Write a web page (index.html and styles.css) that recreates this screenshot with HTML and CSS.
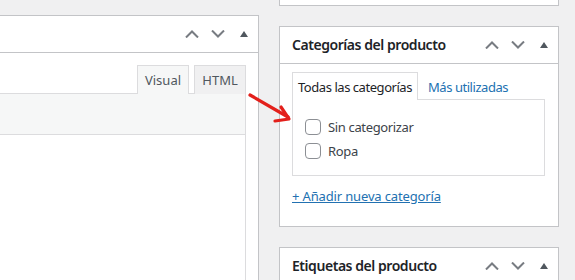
FILE: index.html
```html
<!DOCTYPE html>
<html lang="es">
<head>
    <meta charset="UTF-8">
    <meta name="viewport" content="width=device-width, initial-scale=1.0">
    <title>Editar producto</title>
    <link rel="stylesheet" href="styles.css">
</head>
<body>
    <div class="columns">
        <div class="main-col">
            <div class="postbox editor-box">
                <div class="postbox-header">
                    <h2></h2>
                    <div class="handles">
                        <button class="handle"><svg width="14" height="8" viewBox="0 0 14 8"><path d="M1 7.5 L7 1.5 L13 7.5" fill="none" stroke="#787c82" stroke-width="2"/></svg></button>
                        <button class="handle"><svg width="14" height="8" viewBox="0 0 14 8"><path d="M1 0.5 L7 6.5 L13 0.5" fill="none" stroke="#787c82" stroke-width="2"/></svg></button>
                        <button class="handle"><svg width="8" height="6" viewBox="0 0 8 6"><path d="M4 0 L8 6 L0 6 Z" fill="#50575e"/></svg></button>
                    </div>
                </div>
                <div class="editor-inside">
                    <div class="editor-tabs">
                        <span class="editor-tab active">Visual</span>
                        <span class="editor-tab">HTML</span>
                    </div>
                    <div class="editor-wrap">
                        <div class="editor-toolbar"></div>
                        <div class="editor-content"></div>
                    </div>
                </div>
            </div>
        </div>

        <div class="side-col">
            <div class="postbox top-box"></div>

            <div class="postbox cat-box">
                <div class="postbox-header">
                    <h2>Categorías del producto</h2>
                    <div class="handles">
                        <button class="handle"><svg width="14" height="8" viewBox="0 0 14 8"><path d="M1 7.5 L7 1.5 L13 7.5" fill="none" stroke="#787c82" stroke-width="2"/></svg></button>
                        <button class="handle"><svg width="14" height="8" viewBox="0 0 14 8"><path d="M1 0.5 L7 6.5 L13 0.5" fill="none" stroke="#787c82" stroke-width="2"/></svg></button>
                        <button class="handle"><svg width="8" height="6" viewBox="0 0 8 6"><path d="M4 0 L8 6 L0 6 Z" fill="#50575e"/></svg></button>
                    </div>
                </div>
                <div class="inside">
                    <ul class="cat-tabs">
                        <li class="cat-tab active">Todas las categorías</li>
                        <li class="cat-tab"><a href="#">Más utilizadas</a></li>
                    </ul>
                    <div class="cat-panel">
                        <label class="cat-item"><input type="checkbox"> Sin categorizar</label>
                        <label class="cat-item"><input type="checkbox"> Ropa</label>
                    </div>
                    <a class="add-cat" href="#">+ Añadir nueva categoría</a>
                </div>
            </div>

            <div class="postbox tag-box">
                <div class="postbox-header">
                    <h2>Etiquetas del producto</h2>
                    <div class="handles">
                        <button class="handle"><svg width="14" height="8" viewBox="0 0 14 8"><path d="M1 7.5 L7 1.5 L13 7.5" fill="none" stroke="#787c82" stroke-width="2"/></svg></button>
                        <button class="handle"><svg width="14" height="8" viewBox="0 0 14 8"><path d="M1 0.5 L7 6.5 L13 0.5" fill="none" stroke="#787c82" stroke-width="2"/></svg></button>
                        <button class="handle"><svg width="8" height="6" viewBox="0 0 8 6"><path d="M4 0 L8 6 L0 6 Z" fill="#50575e"/></svg></button>
                    </div>
                </div>
            </div>
        </div>
    </div>

    <!-- flecha roja de anotación -->
    <svg class="annotation" width="60" height="40" viewBox="0 0 60 40">
        <path d="M2 3 L40 25" stroke="#e3201b" stroke-width="3.2" stroke-linecap="round" fill="none"/>
        <path d="M33 15 L41 27 L27 29" stroke="#e3201b" stroke-width="3.2" stroke-linecap="round" stroke-linejoin="round" fill="none"/>
    </svg>
</body>
</html>
```

FILE: styles.css
```css
* {
    margin: 0;
    padding: 0;
    box-sizing: border-box;
}

body {
    font-family: "Noto Sans", "Open Sans", sans-serif;
    font-size: 13px;
    letter-spacing: -0.35px;
    color: #3c434a;
    background: #f0f0f1;
    width: 575px;
    height: 280px;
    overflow: hidden;
    position: relative;
}

.columns {
    display: flex;
    gap: 20px;
}

.main-col {
    width: 259px;
    padding-top: 15px;
}

.side-col {
    width: 280px;
    display: flex;
    flex-direction: column;
    gap: 20px;
}

.postbox {
    background: #fff;
    border: 1px solid #c3c4c7;
}

.editor-box {
    border-left: none;
    border-bottom: none;
    height: 265px;
    overflow: hidden;
}

.top-box {
    height: 6px;
    border-top: none;
}

.cat-box {
    height: 201px;
}

.tag-box {
    height: 33px;
    border-bottom: none;
    overflow: hidden;
}

.postbox-header {
    height: 37px;
    border-bottom: 1px solid #c3c4c7;
    display: flex;
    align-items: center;
    justify-content: space-between;
    padding-left: 12px;
    padding-bottom: 1px;
}

.postbox-header h2 {
    font-size: 14px;
    font-weight: 600;
    color: #1d2327;
    letter-spacing: -0.45px;
}

.handles {
    display: flex;
    align-items: center;
    padding-right: 1px;
}

.handle {
    width: 26px;
    height: 36px;
    border: none;
    background: none;
    display: flex;
    align-items: center;
    justify-content: center;
}

.editor-inside {
    padding: 12px 12px 0 0;
}

.editor-tabs {
    display: flex;
    justify-content: flex-end;
    gap: 5px;
    height: 28px;
}

.editor-tab {
    width: 52px;
    height: 29px;
    border: 1px solid #dcdcde;
    border-bottom: none;
    background: #f0f0f1;
    color: #50575e;
    font-size: 13px;
    letter-spacing: 0;
    display: flex;
    align-items: center;
    justify-content: center;
    position: relative;
}

.editor-tab.active {
    background: #f6f7f7;
    z-index: 1;
}

.editor-wrap {
    border: 1px solid #dcdcde;
    border-left: none;
}

.editor-toolbar {
    height: 41px;
    background: #f6f7f7;
    border-bottom: 1px solid #dcdcde;
}

.editor-content {
    height: 200px;
    background: #fff;
}

.inside {
    padding: 8px 12px 0 12px;
}

.cat-tabs {
    list-style: none;
    display: flex;
    height: 27px;
    letter-spacing: -0.45px;
}

.cat-tab {
    padding: 0 5px;
    display: flex;
    align-items: center;
    font-size: 13px;
    height: 28px;
    border: 1px solid transparent;
    border-bottom: none;
}

.cat-tab + .cat-tab {
    padding-left: 9px;
}

.cat-tab.active {
    border-color: #dcdcde;
    background: #fff;
    color: #1d2327;
    position: relative;
    z-index: 1;
}

.cat-tab a {
    color: #2271b1;
    text-decoration: none;
}

.cat-panel {
    width: 253px;
    height: 77px;
    border: 1px solid #dcdcde;
    padding: 19px 12px 0 12px;
    display: flex;
    flex-direction: column;
    gap: 8px;
}

.cat-item {
    display: flex;
    align-items: center;
    gap: 7px;
    height: 16px;
    color: #3c434a;
}

.cat-item input {
    appearance: none;
    width: 16px;
    height: 16px;
    border: 1px solid #8c8f94;
    border-radius: 4px;
    background: #fff;
    margin: 0;
}

.add-cat {
    display: inline-block;
    margin-top: 11px;
    color: #2271b1;
    text-decoration: underline;
    font-size: 13px;
    letter-spacing: -0.15px;
}

.annotation {
    position: absolute;
    left: 248px;
    top: 92px;
}
```
